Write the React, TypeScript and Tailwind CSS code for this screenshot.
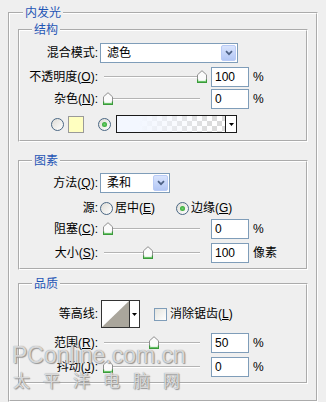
import React from 'react';

const Label = ({ children }: { children: React.ReactNode }) => (
  <div className="w-[78px] shrink-0 text-right whitespace-nowrap">{children}</div>
);

const Key = ({ k }: { k: string }) => (
  <>
    (<span className="underline underline-offset-1">{k}</span>)
  </>
);

function Thumb({ left }: { left: number }) {
  return (
    <svg width="10" height="13" viewBox="0 0 10 13" className="absolute top-[3px]" style={{ left }}>
      <path d="M0.5 12.5V4.8L5 0.7L9.5 4.8V12.5Z" fill="#fbfbfb" stroke="#8f8f8f" />
      <path d="M0.5 9.5V12.5H9.5V9.5" fill="none" stroke="#3b9b3b" strokeWidth="1.4" />
      <path d="M1.2 11.4H8.8" stroke="#5cc05c" strokeWidth="1" />
    </svg>
  );
}

function Slider({ pos }: { pos: number }) {
  return (
    <div className="relative ml-[2px] h-[20px] w-[111px] shrink-0">
      <div className="ml-[4px] mt-[9px] h-[2px] w-[96px] border-t border-b border-t-[#b4b4b4] border-b-white" />
      <Thumb left={pos} />
    </div>
  );
}

const NumBox = ({ v }: { v: string }) => (
  <div className="h-[20px] w-[38px] shrink-0 border border-[#7f9db9] bg-white pl-[3px] leading-[18px]">{v}</div>
);

function Select({ text, wide }: { text: string; wide?: boolean }) {
  return (
    <div className={`ml-[2px] flex h-[20px] shrink-0 border border-[#7f9db9] bg-white ${wide ? 'w-[138px]' : 'w-[70px]'}`}>
      <div className="flex-1 pl-[6px] leading-[18px]">{text}</div>
      <div className="m-px flex w-[15px] items-center justify-center rounded-[2px] border border-[#b9cbf6] bg-gradient-to-b from-[#d9e4fd] to-[#b3c7f5]">
        <svg width="8" height="6" viewBox="0 0 8 6">
          <path d="M1 1.2L4 4.2L7 1.2" stroke="#4d6185" strokeWidth="1.7" fill="none" />
        </svg>
      </div>
    </div>
  );
}

const Radio = ({ on }: { on?: boolean }) => (
  <div className="flex h-[13px] w-[13px] shrink-0 items-center justify-center rounded-full border border-[#4a6784] bg-gradient-to-br from-[#dedcd6] to-white">
    {on && <div className="h-[5px] w-[5px] rounded-full bg-[radial-gradient(circle,#6fd06f,#1f9a1f)]" />}
  </div>
);

const Arrow = () => (
  <svg width="5" height="3" viewBox="0 0 5 3">
    <path d="M0 0H5L2.5 3Z" fill="#000" />
  </svg>
);

function Group({ title, className, children }: { title: string; className: string; children: React.ReactNode }) {
  return (
    <fieldset className={`[border:2px_groove_#fff] ${className}`}>
      <legend className="ml-[12px] px-[2px] leading-[16px] text-[#1f55b5]">{title}</legend>
      {children}
    </fieldset>
  );
}

export default function App() {
  return (
    <div className="relative h-[402px] w-[326px] overflow-hidden bg-[#efefef] pt-[5px] text-[12px] text-black [font-family:'Liberation_Sans','Noto_Sans_CJK_SC',sans-serif]">
      <fieldset className="mx-[8px] px-[8px] pb-[16px] [border:2px_groove_#fff]">
        <legend className="ml-[5px] px-[2px] leading-[16px] text-[#1f55b5]">内发光</legend>

        <Group title="结构" className="mt-[1px] pb-[7px]">
          <div className="mt-[5px] flex h-[20px] items-center">
            <Label>混合模式:</Label>
            <Select text="滤色" wide />
          </div>
          <div className="mt-[4px] flex h-[20px] items-center">
            <Label>
              不透明度<Key k="O" />:
            </Label>
            <Slider pos={97} />
            <NumBox v="100" />
            <span className="ml-[4px]">%</span>
          </div>
          <div className="mt-[2px] flex h-[20px] items-center">
            <Label>
              杂色<Key k="N" />:
            </Label>
            <Slider pos={3} />
            <NumBox v="0" />
            <span className="ml-[4px]">%</span>
          </div>
          <div className="mt-[6px] flex h-[18px] items-center">
            <div className="ml-[31px]">
              <Radio />
            </div>
            <div className="ml-[4px] h-[17px] w-[16px] border border-[#9a9a9a] bg-[#ffffc0]" />
            <div className="ml-[14px]">
              <Radio on />
            </div>
            <div className="ml-[5px] flex h-[18px] w-[121px] border border-[#1a1a1a] bg-white">
              <div className="flex-1 bg-[linear-gradient(to_right,#f3f7ff,#f3f7ff_20%,#ffffff00_90%),repeating-conic-gradient(#dadada_0_25%,#ffffff_0_50%)] bg-[length:100%_100%,10px_10px]" />
              <div className="flex w-[11px] items-center justify-center border-l border-[#1a1a1a] bg-white">
                <Arrow />
              </div>
            </div>
          </div>
        </Group>

        <Group title="图素" className="mt-[11px] pb-[5px]">
          <div className="mt-[4px] flex h-[20px] items-center">
            <Label>
              方法<Key k="Q" />:
            </Label>
            <Select text="柔和" />
          </div>
          <div className="mt-[7px] flex h-[16px] items-center">
            <Label>源:</Label>
            <div className="ml-[2px] flex w-[76px] items-center">
              <Radio />
              <span className="ml-[2px]">
                居中<Key k="E" />
              </span>
            </div>
            <Radio on />
            <span className="ml-[2px]">
              边缘<Key k="G" />
            </span>
          </div>
          <div className="mt-[3px] flex h-[20px] items-center">
            <Label>
              阻塞<Key k="C" />:
            </Label>
            <Slider pos={3} />
            <NumBox v="0" />
            <span className="ml-[4px]">%</span>
          </div>
          <div className="mt-[4px] flex h-[20px] items-center">
            <Label>
              大小<Key k="S" />:
            </Label>
            <Slider pos={43} />
            <NumBox v="100" />
            <span className="ml-[4px]">像素</span>
          </div>
        </Group>

        <Group title="品质" className="mt-[6px] pb-[5px]">
          <div className="mt-[8px] flex h-[28px] items-center">
            <Label>等高线:</Label>
            <div className="ml-[3px] flex h-[28px] w-[39px] border border-[#333]">
              <svg className="h-full flex-1" viewBox="0 0 28 26" preserveAspectRatio="none">
                <rect width="28" height="26" fill="#fff" />
                <path d="M0 26L28 0V26Z" fill="#aaa69c" />
              </svg>
              <div className="flex w-[10px] items-center justify-center border-l border-[#333] bg-white">
                <Arrow />
              </div>
            </div>
            <div className="ml-[14px] h-[13px] w-[13px] border border-[#7f9db9] bg-gradient-to-br from-[#e4e4de] to-white" />
            <span className="ml-[3px]">
              消除锯齿<Key k="L" />
            </span>
          </div>
          <div className="mt-[5px] flex h-[20px] items-center">
            <Label>
              范围<Key k="R" />:
            </Label>
            <Slider pos={49} />
            <NumBox v="50" />
            <span className="ml-[4px]">%</span>
          </div>
          <div className="mt-[4px] flex h-[20px] items-center">
            <Label>
              抖动<Key k="J" />:
            </Label>
            <Slider pos={3} />
            <NumBox v="0" />
            <span className="ml-[4px]">%</span>
          </div>
        </Group>
      </fieldset>

      {/* watermark */}
      <div className="pointer-events-none absolute left-[12px] top-[344px] text-[23px] leading-none text-white/70 [text-shadow:0_0_1px_#777,1px_1px_1px_#999]">
        PConline.com.cn
      </div>
      <div className="pointer-events-none absolute left-[13px] top-[371px] text-[17px] leading-none tracking-[13px] text-white/70 [font-family:'Noto_Sans_CJK_SC',sans-serif] [text-shadow:0_0_1px_#777,1px_1px_1px_#999]">
        太平洋电脑网
      </div>
    </div>
  );
}
